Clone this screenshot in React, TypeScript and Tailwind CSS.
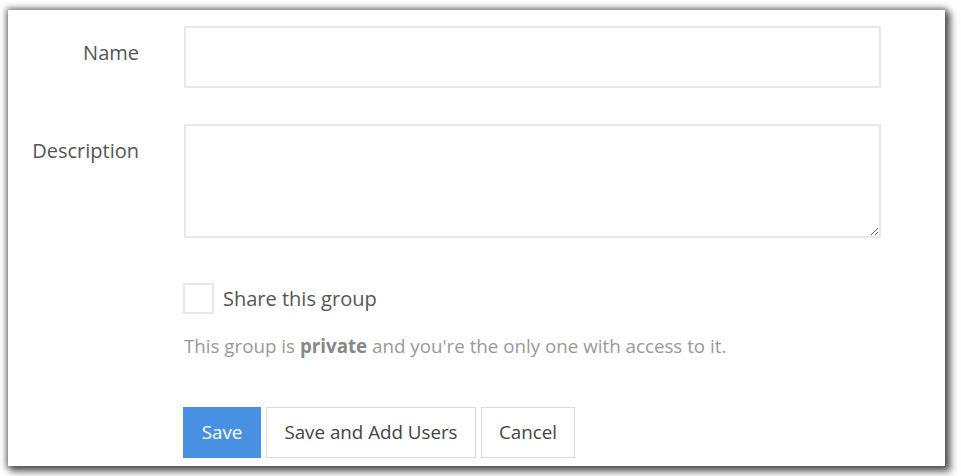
import React from "react";

export default function App() {
  return (
    <div className="w-[961px] h-[476px] bg-white overflow-hidden pt-[10px] pl-[8px] font-['Open_Sans',sans-serif]">
      <div className="w-[937px] h-[456px] bg-white shadow-[0_0_6px_2px_rgba(0,0,0,0.45),4px_4px_7px_2px_rgba(0,0,0,0.5)] pt-[16px]">
        <div className="flex">
          <div className="w-[131px] text-right pt-[13px] text-[20px] leading-[28px] text-[#555]">Name</div>
          <input
            type="text"
            className="ml-[45px] w-[697px] h-[62px] border-2 border-[#e8e8e8] bg-white outline-none px-3"
          />
        </div>
        <div className="flex mt-[36px]">
          <div className="w-[131px] text-right pt-[13px] text-[20px] leading-[28px] text-[#555]">Description</div>
          <textarea className="ml-[45px] w-[697px] h-[114px] border-2 border-[#e8e8e8] bg-white outline-none px-3" />
        </div>
        <div className="ml-[175px] mt-[45px] flex items-center">
          <div className="w-[31px] h-[31px] border-2 border-[#e8e8e8] bg-white" />
          <span className="ml-[9px] text-[20px] leading-[28px] text-[#555]">Share this group</span>
        </div>
        <div className="ml-[176px] mt-[20px] text-[18.75px] leading-[24px] text-[#999]">
          This group is <span className="font-bold text-[#888]">private</span> and you're the only one with access to it.
        </div>
        <div className="ml-[175px] mt-[49px] flex gap-[5px]">
          <button className="w-[78px] h-[51px] bg-[#4a90e2] border border-[#4a8ee0] text-white text-[18.75px]">Save</button>
          <button className="w-[210px] h-[51px] bg-white border border-[#d9d9d9] text-[#444] text-[18.75px]">Save and Add Users</button>
          <button className="w-[94px] h-[51px] bg-white border border-[#d9d9d9] text-[#444] text-[18.75px]">Cancel</button>
        </div>
      </div>
    </div>
  );
}
